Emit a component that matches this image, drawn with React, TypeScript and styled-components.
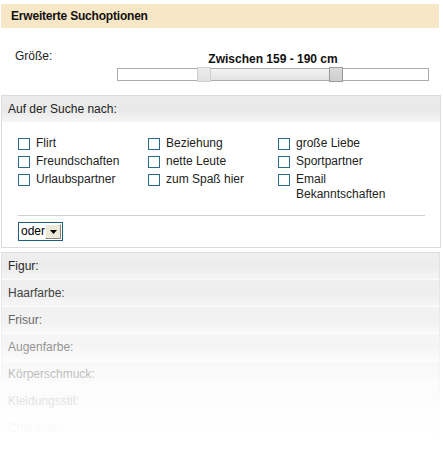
import React from "react";
import styled, { createGlobalStyle } from "styled-components";

const Global = createGlobalStyle`
  html, body { margin: 0; padding: 0; background: #fff; }
  body { font-family: "Liberation Sans", Arial, sans-serif; font-size: 12px; color: #222; }
`;

const Page = styled.div`
  width: 443px;
  padding-top: 4px;
`;

const TitleBar = styled.div`
  margin: 0 4px 0 1px;
  height: 24px;
  background: #f8e7c6;
  display: flex;
  align-items: center;
  padding-left: 10px;
  font-weight: bold;
  font-size: 12px;
  letter-spacing: -0.2px;
  color: #111;
`;

const SizeRow = styled.div`
  display: flex;
  padding: 21px 0 0 15px;
  height: 67px;
  box-sizing: border-box;
`;

const SizeLabel = styled.div`
  width: 102px;
  font-size: 12px;
  color: #222;
  line-height: 14px;
`;

const SliderBox = styled.div`
  width: 312px;
  display: flex;
  flex-direction: column;
  align-items: center;
`;

const SliderValue = styled.div`
  font-weight: bold;
  font-size: 12px;
  color: #111;
  line-height: 14px;
  margin: 3px 0 2px 0;
`;

const Track = styled.div`
  position: relative;
  width: 100%;
  height: 13px;
  box-sizing: border-box;
  border: 1px solid #ababab;
  background: #fff;
`;

const Range = styled.div`
  position: absolute;
  top: 0;
  bottom: 0;
  background: linear-gradient(#f4f4f4, #e2e2e2);
`;

const Thumb = styled.div<{ $active?: boolean }>`
  position: absolute;
  top: -2px;
  width: 14px;
  height: 15px;
  box-sizing: border-box;
  border: 1px solid ${(p) => (p.$active ? "#9a9a9a" : "#d0d0d0")};
  background: ${(p) => (p.$active ? "linear-gradient(#dadada, #cfcfcf)" : "linear-gradient(#ececec, #e2e2e2)")};
`;

const Panel = styled.div`
  margin: 0 2px 0 1px;
  border: 1px solid #dcdcdc;
`;

const PanelHead = styled.div`
  height: 26px;
  display: flex;
  align-items: center;
  padding-left: 6px;
  font-size: 12px;
  color: #222;
  background: linear-gradient(#ececec 0%, #e9e9e9 55%, #f6f6f6 100%);
`;

const PanelBody = styled.div`
  padding: 14px 15px 6px 16px;
`;

const Grid = styled.div`
  display: grid;
  grid-template-columns: 130px 130px 110px;
  row-gap: 3px;
`;

const Option = styled.label`
  display: flex;
  align-items: flex-start;
  gap: 6px;
  font-size: 12px;
  line-height: 15px;
  color: #222;
`;

const Box = styled.span`
  flex: none;
  width: 12px;
  height: 12px;
  box-sizing: border-box;
  margin-top: 2px;
  border: 1px solid #2a6a8c;
  background: #fff;
`;

const Divider = styled.div`
  height: 1px;
  background: #cfcfcf;
  margin: 13px 0 6px 0;
`;

const Select = styled.div`
  display: inline-flex;
  align-items: center;
  height: 19px;
  width: 45px;
  box-sizing: border-box;
  border: 1px solid #1e5f84;
  background: #fff;
  font-size: 12px;
  color: #000;
  vertical-align: top;
`;

const SelectText = styled.span`
  flex: 1;
  padding-left: 2px;
  line-height: 17px;
`;

const SelectButton = styled.span`
  flex: none;
  width: 16px;
  height: 15px;
  margin-right: 1px;
  box-sizing: border-box;
  background: #ece9d8;
  border-top: 1px solid #fff;
  border-left: 1px solid #fff;
  border-right: 1px solid #8a8778;
  border-bottom: 1px solid #8a8778;
  display: flex;
  align-items: center;
  justify-content: center;
`;

const SelectRow = styled.div`
  height: 19px;
`;

const Rows = styled.div`
  position: relative;
  margin: 4px 3px 0 1px;
  border-top: 1px solid #dedede;
`;

const Row = styled.div`
  height: 26px;
  display: flex;
  align-items: center;
  padding-left: 6px;
  font-size: 12px;
  color: #222;
  border-left: 1px solid #e2e2e2;
  border-right: 1px solid #e2e2e2;
  border-bottom: 1px solid #fafafa;
  background: linear-gradient(#efefef 0%, #ebebeb 50%, #f5f5f5 100%);
`;

const Fade = styled.div`
  position: absolute;
  left: -2px;
  right: -2px;
  top: 0;
  bottom: -2px;
  background: linear-gradient(
    rgba(255, 255, 255, 0) 0%,
    rgba(255, 255, 255, 0.06) 14%,
    rgba(255, 255, 255, 0.22) 28%,
    rgba(255, 255, 255, 0.42) 43%,
    rgba(255, 255, 255, 0.62) 57%,
    rgba(255, 255, 255, 0.8) 71%,
    rgba(255, 255, 255, 0.93) 85%,
    rgba(255, 255, 255, 1) 97%
  );
`;

const options = [
  "Flirt",
  "Beziehung",
  "große Liebe",
  "Freundschaften",
  "nette Leute",
  "Sportpartner",
  "Urlaubspartner",
  "zum Spaß hier",
  "Email Bekanntschaften",
];

const rows = ["Figur:", "Haarfarbe:", "Frisur:", "Augenfarbe:", "Körperschmuck:", "Kleidungsstil:", "Charakter:"];

export default function App() {
  const loX = 80;
  const hiX = 212;
  return (
    <Page>
      <Global />
      <TitleBar>Erweiterte Suchoptionen</TitleBar>
      <SizeRow>
        <SizeLabel>Größe:</SizeLabel>
        <SliderBox>
          <SliderValue>Zwischen 159 - 190 cm</SliderValue>
          <Track>
            <Range style={{ left: loX, width: hiX - loX }} />
            <Thumb style={{ left: loX - 1 }} />
            <Thumb $active style={{ left: hiX - 1 }} />
          </Track>
        </SliderBox>
      </SizeRow>
      <Panel>
        <PanelHead>Auf der Suche nach:</PanelHead>
        <PanelBody>
          <Grid>
            {options.map((o) => (
              <Option key={o}>
                <Box />
                <span>{o}</span>
              </Option>
            ))}
          </Grid>
          <Divider />
          <SelectRow>
            <Select>
              <SelectText>oder</SelectText>
              <SelectButton>
                <svg width="7" height="4" viewBox="0 0 7 4">
                  <path d="M0 0h7L3.5 4z" fill="#000" />
                </svg>
              </SelectButton>
            </Select>
          </SelectRow>
        </PanelBody>
      </Panel>
      <Rows>
        {rows.map((r) => (
          <Row key={r}>{r}</Row>
        ))}
        <Fade />
      </Rows>
    </Page>
  );
}
